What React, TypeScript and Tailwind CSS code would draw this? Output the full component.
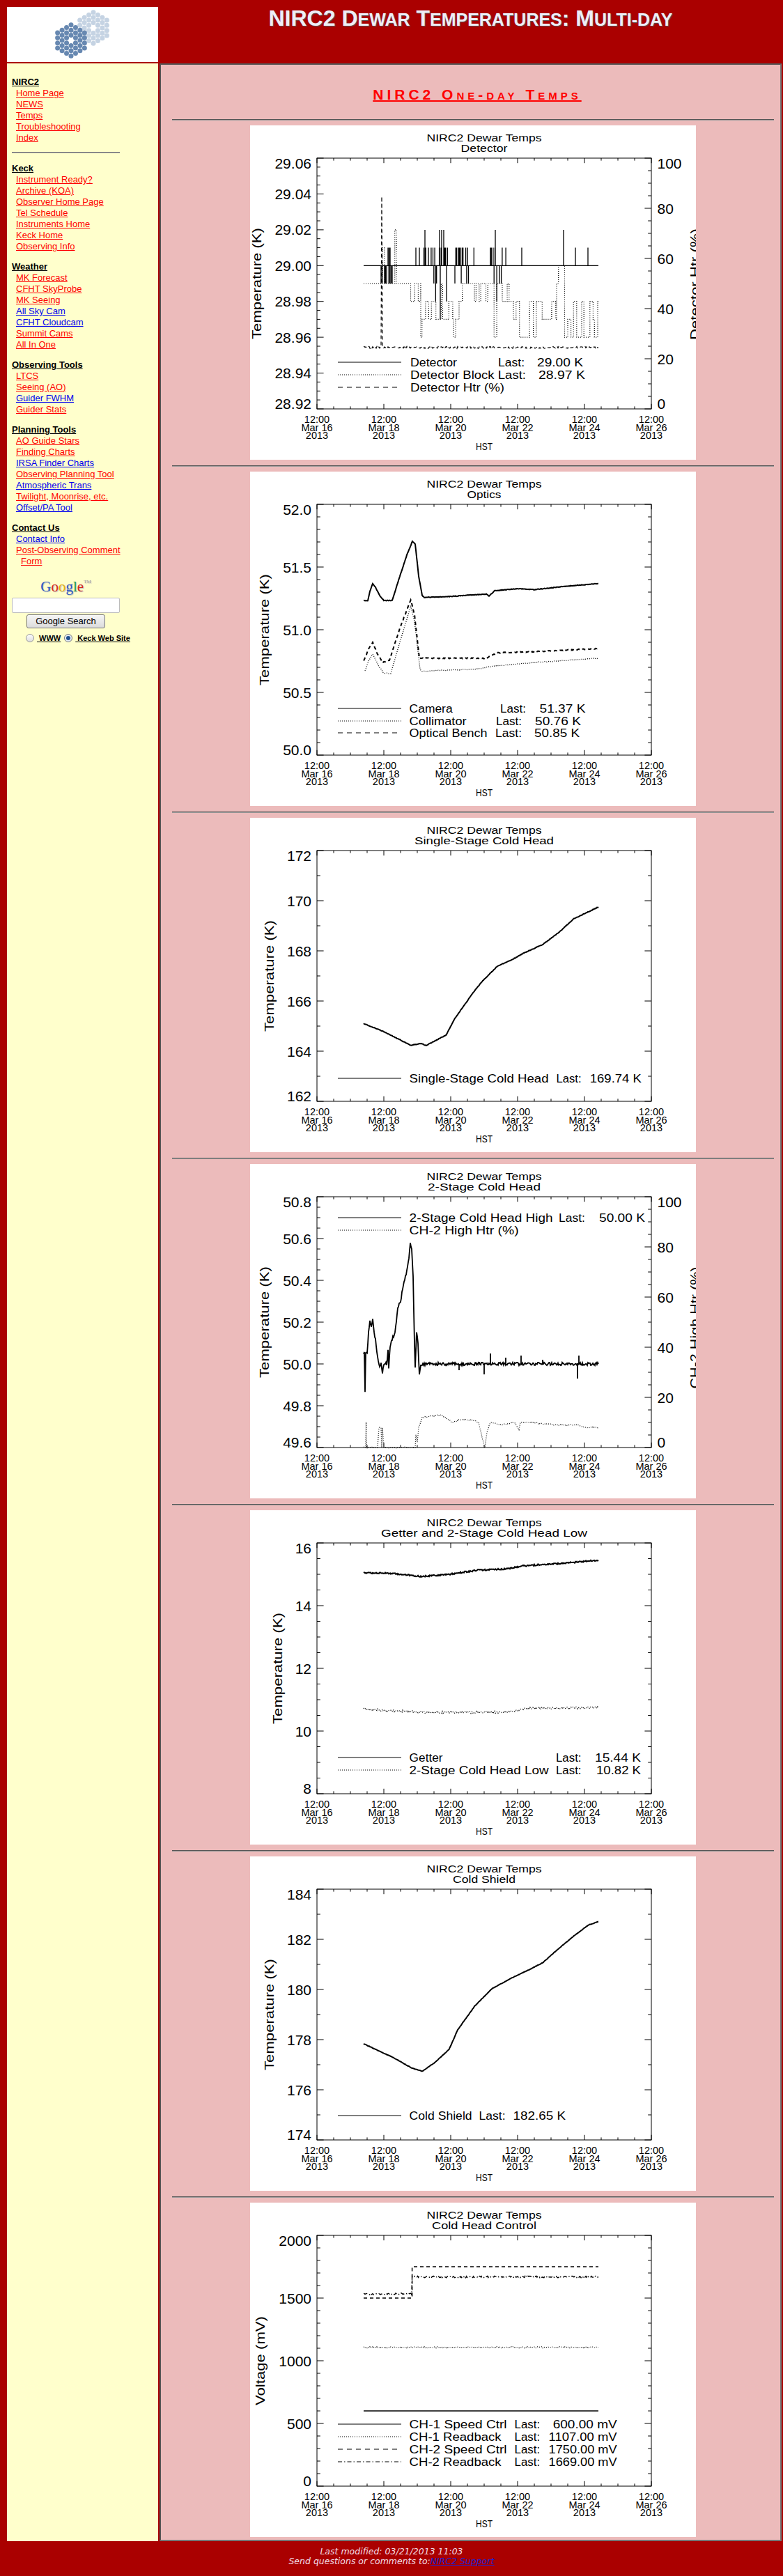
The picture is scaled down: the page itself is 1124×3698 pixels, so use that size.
import React from 'react';

type Style = 'solid' | 'dot' | 'dash' | 'dashdot';
type Axis = { min: number; max: number; major: number; minor: number; dec: number };
type Series = { d: string; style: Style; w?: number };
type LegendRow = { style: Style; y: number; segs: [string, number, number][] };
type ChartCfg = {
  sub: string;
  subW: number;
  left: Axis;
  yTitle: string;
  yTitleX: number;
  yTitleW: number;
  right?: { axis: Axis; title: string; titleW: number; titleY: number };
  legend: LegendRow[];
  series: Series[];
};

const PX0 = 96;
const PX1 = 576;
const PY0 = 47;
const PY1 = 407;
const DATES = ['Mar 16', 'Mar 18', 'Mar 20', 'Mar 22', 'Mar 24', 'Mar 26'];

function rng(seed: number) {
  let s = seed;
  return () => {
    s = (s * 16807) % 2147483647;
    return (s - 1) / 2147483646;
  };
}

const f = (n: number) => n.toFixed(1);

// key points joined up, with a little noise on the way
function interp(keys: [number, number][], amp: number, seed: number): string {
  const r = rng(seed);
  const out: string[] = [];
  for (let i = 0; i < keys.length - 1; i++) {
    const [x0, y0] = keys[i];
    const [x1, y1] = keys[i + 1];
    const n = Math.max(1, Math.round(x1 - x0));
    for (let k = 0; k < n; k++) {
      const t = k / n;
      out.push(`${f(x0 + (x1 - x0) * t)},${f(y0 + (y1 - y0) * t + (r() - 0.5) * 2 * amp)}`);
    }
  }
  const last = keys[keys.length - 1];
  out.push(`${f(last[0])},${f(last[1])}`);
  return 'M' + out.join(' L');
}

function bars(x0: number, x1: number, step: number, p: number, levels: number[], yb: number, Y: (v: number) => number, seed: number) {
  const r = rng(seed);
  let d = '';
  for (let x = x0; x <= x1; x += step) {
    if (r() < p) {
      const l = levels[Math.floor(r() * levels.length)];
      d += `M${f(x)},${f(yb)}V${f(Y(l))}`;
    }
  }
  return d;
}

function steps(ranges: [number, number, number[]][], Y: (v: number) => number, seed: number, minLen: number, maxLen: number) {
  const r = rng(seed);
  let d = `M${ranges[0][0]},${f(Y(ranges[0][2][0]))}`;
  for (const [a, b, lv] of ranges) {
    let x = a;
    while (x < b) {
      const nx = Math.min(b, x + minLen + r() * (maxLen - minLen));
      d += `V${f(Y(lv[Math.floor(r() * lv.length)]))}H${f(nx)}`;
      x = nx;
    }
  }
  return d;
}

const map = (keys: [number, number][], Y: (v: number) => number): [number, number][] => keys.map(([x, v]) => [x, Y(v)]);

/* ---------- chart data ---------- */

const Y1 = (t: number) => 47 + ((29.06 - t) / 0.14) * 360;
const YR = (p: number) => 407 - p * 3.6;
const b1 = Y1(29.0);
const det =
  `M163,${f(b1)}H500` +
  bars(188, 205, 1.6, 0.7, [28.99], b1, Y1, 11) +
  bars(198, 202, 1.5, 1, [29.01], b1, Y1, 12) +
  `M238,${f(b1)}V${f(Y1(29.01))}` +
  bars(243, 285, 1.3, 0.7, [28.99, 28.99, 28.98, 29.01, 29.01], b1, Y1, 13) +
  bars(294, 323, 1.3, 0.65, [29.01, 29.01, 28.99], b1, Y1, 14) +
  bars(345, 368, 1.3, 0.65, [28.99, 28.98, 29.01], b1, Y1, 15) +
  [251, 272, 275, 278, 352, 450].map((x) => `M${x},${f(b1)}V${f(Y1(29.02))}`).join('') +
  `M273,${f(b1)}V${f(Y1(28.97))}` +
  [390, 467, 485].map((x) => `M${x},${f(b1)}V${f(Y1(29.01))}`).join('');
const block = steps(
  [
    [163, 190, [28.99]],
    [190, 210, [28.99, 29.02, 28.99, 29.01, 28.99, 29.02]],
    [210, 245, [28.98, 28.99]],
    [245, 262, [28.96, 28.97, 28.98]],
    [262, 292, [28.97, 28.98, 28.99]],
    [292, 300, [28.96, 28.97]],
    [300, 345, [28.98, 28.99]],
    [345, 362, [28.96, 28.97, 28.99]],
    [362, 378, [28.98, 28.99]],
    [378, 440, [28.96, 28.97, 28.98]],
    [440, 456, [28.96, 28.99, 29.0, 28.98]],
    [456, 500, [28.96, 28.97, 28.98]],
  ],
  Y1,
  21,
  1.5,
  5
);
const htr1 = interp(
  map(
    [
      [163, 24.5],
      [188, 24.5],
      [189, 85],
      [190, 24.5],
      [500, 24.5],
    ],
    YR
  ),
  1.4,
  31
);

const cam = interp(
  [
    [163, 185], [169, 185], [172, 172], [176, 161], [180, 166], [186, 178], [192, 185], [204, 185],
    [215, 150], [225, 120], [233, 100], [237, 104], [242, 150], [247, 177.6], [250, 180.7], [286, 179.4],
    [339, 175.7], [343, 178.8], [351, 171], [384, 168], [408, 169.5], [449, 165], [500, 160.7],
  ],
  0.4,
  41
);
const coll = interp(
  [
    [165, 286.6], [170, 272], [176, 261.7], [184, 278], [192, 289.7], [202, 289.7], [215, 245], [230.6, 193],
    [236, 215], [244, 283.5], [246, 286.6], [326.5, 283.5], [343, 280], [408, 274], [500, 268],
  ],
  0.5,
  42
);
const bench = interp(
  [
    [163, 272], [170, 255], [176, 245], [183, 262], [190.6, 274], [200, 271], [215, 225], [230.6, 184],
    [236, 205], [243, 268], [286, 268], [339, 268], [355, 260], [408, 258.6], [500, 254],
  ],
  0.6,
  43
);

const cold1 = interp(
  [
    [163, 295.5], [192, 307], [230.6, 326.7], [245, 324], [253, 326.7], [281.6, 311.7], [294, 288], [322, 248.5],
    [333, 235], [355, 213], [375.5, 204], [392, 194.6], [420, 182], [445, 163], [465, 144.7], [500, 128],
  ],
  0.4,
  51
);

const Y4 = (t: number) => 47 + (50.8 - t) * 300;
const ch2 =
  interp(
    map(
      [
        [163, 50.04], [164, 50.05], [165, 49.86], [166, 50.06], [168, 50.05], [170, 50.15], [172, 50.2], [174, 50.18],
        [176, 50.21], [178, 50.15], [180, 50.12], [182, 50.05], [184, 50.02], [186, 49.99], [188, 50.0], [190, 49.96],
        [192, 50.0], [196, 50.0], [198, 50.06], [199, 49.98], [201, 50.08], [204, 50.12], [208, 50.15], [212, 50.27],
        [216, 50.3], [220, 50.38], [224, 50.43], [228, 50.5], [230, 50.58], [232, 50.55], [234, 50.42], [236, 50.1],
        [237, 49.98], [239, 50.15], [241, 50.1], [243, 49.95], [245, 50.0], [500, 50.0],
      ],
      Y4
    ),
    2.2,
    61
  ) +
  [
    [336, 49.95], [345, 50.05], [367, 50.03], [389, 50.04], [470, 49.93], [472, 50.04], [300, 49.97], [420, 50.02],
  ]
    .map(([x, v]) => `M${x},${f(Y4(50))}V${f(Y4(v))}`)
    .join('');
const htr4 = interp(
  map(
    [
      [163, 0], [166, 0], [166.5, 10], [167, 0], [183, 0], [185, 8], [188, 8], [189, 0], [190, 8], [192, 0],
      [237, 0], [238, 5], [240, 2], [242, 8], [247, 12], [260, 12.5], [275, 13], [280, 12], [290, 10], [300, 11],
      [320, 11], [328, 10], [334, 3], [337, 0], [340, 6], [345, 10], [360, 9], [380, 10], [386, 7], [388, 10],
      [400, 10], [440, 9], [470, 9], [480, 8], [500, 8],
    ],
    YR
  ),
  0.8,
  62
);

const Y5 = (t: number) => 47 + (16 - t) * 45;
const getter = interp(
  map(
    [
      [163, 15.05], [205, 15.03], [245, 14.93], [286, 15.0], [326, 15.13], [367, 15.17], [392, 15.27], [449, 15.35], [500, 15.45],
    ],
    Y5
  ),
  1,
  71
);
const low = interp(
  map(
    [
      [163, 10.7], [245, 10.6], [367, 10.6], [400, 10.72], [500, 10.75],
    ],
    Y5
  ),
  1.5,
  72
);

const shield = interp(
  [
    [163, 269], [204, 288], [232.6, 304], [247, 308.4], [265, 296], [285.7, 277], [298, 249], [322.4, 215], [347, 190],
    [375.5, 174.5], [400, 163], [420, 152.6], [441, 134], [465, 114], [485.7, 98.4], [500, 93.5],
  ],
  0.3,
  81
);

const Y7 = (v: number) => 47 + (2000 - v) * 0.18;
const sp1 = `M163,${f(Y7(600))}H500`;
const rb1 = interp(map([[163, 1107], [500, 1107]], Y7), 1, 91);
const sp2 = `M163,${f(Y7(1500))}H232.6V${f(Y7(1750))}H500`;
const rb2 = interp(map([[163, 1530], [230, 1535], [232, 1530], [232.6, 1669], [500, 1669]], Y7), 1.2, 92);

const TEMP = 'Temperature (K)';

const CHARTS: ChartCfg[] = [
  {
    sub: 'Detector',
    subW: 67,
    left: { min: 28.92, max: 29.06, major: 0.02, minor: 4, dec: 2 },
    yTitle: TEMP,
    yTitleX: 15.5,
    yTitleW: 160,
    right: { axis: { min: 0, max: 100, major: 20, minor: 4, dec: 0 }, title: 'Detector Htr (%)', titleW: 160, titleY: 228 },
    legend: [
      { style: 'solid', y: 340, segs: [['Detector', 230, 67], ['Last:', 356, 38], ['29.00 K', 412, 66]] },
      { style: 'dot', y: 358, segs: [['Detector Block Last:', 230, 166], ['28.97 K', 414, 67]] },
      { style: 'dash', y: 376, segs: [['Detector Htr (%)', 230, 135]] },
    ],
    series: [
      { d: det, style: 'solid', w: 1.3 },
      { d: block, style: 'dot', w: 1.2 },
      { d: htr1, style: 'dash', w: 1.2 },
    ],
  },
  {
    sub: 'Optics',
    subW: 49,
    left: { min: 50, max: 52, major: 0.5, minor: 5, dec: 1 },
    yTitle: TEMP,
    yTitleX: 26.5,
    yTitleW: 160,
    legend: [
      { style: 'solid', y: 340, segs: [['Camera', 228.6, 62], ['Last:', 359, 37], ['51.37 K', 415.5, 66]] },
      { style: 'dot', y: 358, segs: [['Collimator', 228.6, 82], ['Last:', 353, 37], ['50.76 K', 409, 66]] },
      { style: 'dash', y: 375, segs: [['Optical Bench', 228.6, 112], ['Last:', 352, 38], ['50.85 K', 408, 65]] },
    ],
    series: [
      { d: cam, style: 'solid', w: 2 },
      { d: coll, style: 'dot', w: 1.3 },
      { d: bench, style: 'dash', w: 2 },
    ],
  },
  {
    sub: 'Single-Stage Cold Head',
    subW: 200,
    left: { min: 162, max: 172, major: 2, minor: 2, dec: 0 },
    yTitle: TEMP,
    yTitleX: 34,
    yTitleW: 160,
    legend: [
      { style: 'solid', y: 374, segs: [['Single-Stage Cold Head', 228.6, 200], ['Last:', 439.6, 36], ['169.74 K', 487.8, 74]] },
    ],
    series: [{ d: cold1, style: 'solid', w: 2 }],
  },
  {
    sub: '2-Stage Cold Head',
    subW: 162,
    left: { min: 49.6, max: 50.8, major: 0.2, minor: 4, dec: 1 },
    yTitle: TEMP,
    yTitleX: 26.5,
    yTitleW: 160,
    right: { axis: { min: 0, max: 100, major: 20, minor: 4, dec: 0 }, title: 'CH-2 High Htr (%)', titleW: 175, titleY: 235 },
    legend: [
      { style: 'solid', y: 77, segs: [['2-Stage Cold Head High', 228.6, 206], ['Last:', 442.9, 38], ['50.00 K', 501, 66]] },
      { style: 'dot', y: 95, segs: [['CH-2 High Htr (%)', 228.6, 157]] },
    ],
    series: [
      { d: ch2, style: 'solid', w: 1.8 },
      { d: htr4, style: 'dot', w: 1.2 },
    ],
  },
  {
    sub: 'Getter and 2-Stage Cold Head Low',
    subW: 296,
    left: { min: 8, max: 16, major: 2, minor: 4, dec: 0 },
    yTitle: TEMP,
    yTitleX: 46,
    yTitleW: 160,
    legend: [
      { style: 'solid', y: 355, segs: [['Getter', 228.6, 48], ['Last:', 439, 36.5], ['15.44 K', 495, 66]] },
      { style: 'dot', y: 373, segs: [['2-Stage Cold Head Low', 228.6, 200], ['Last:', 439, 36.5], ['10.82 K', 497, 64]] },
    ],
    series: [
      { d: getter, style: 'solid', w: 2 },
      { d: low, style: 'dot', w: 1.4 },
    ],
  },
  {
    sub: 'Cold Shield',
    subW: 90,
    left: { min: 174, max: 184, major: 2, minor: 2, dec: 0 },
    yTitle: TEMP,
    yTitleX: 34,
    yTitleW: 160,
    legend: [{ style: 'solid', y: 372, segs: [['Cold Shield', 228.6, 90], ['Last:', 328.6, 38], ['182.65 K', 377.5, 75.5]] }],
    series: [{ d: shield, style: 'solid', w: 2 }],
  },
  {
    sub: 'Cold Head Control',
    subW: 150,
    left: { min: 0, max: 2000, major: 500, minor: 5, dec: 0 },
    yTitle: 'Voltage (mV)',
    yTitleX: 20.5,
    yTitleW: 128,
    legend: [
      { style: 'solid', y: 318, segs: [['CH-1 Speed Ctrl', 228.6, 140], ['Last:', 379.6, 36.5], ['600.00 mV', 434.7, 92]] },
      { style: 'dot', y: 336, segs: [['CH-1 Readback', 228.6, 132], ['Last:', 379.6, 36.5], ['1107.00 mV', 428.6, 98]] },
      { style: 'dash', y: 354, segs: [['CH-2 Speed Ctrl', 228.6, 140], ['Last:', 379.6, 36.5], ['1750.00 mV', 428.6, 98]] },
      { style: 'dashdot', y: 372, segs: [['CH-2 Readback', 228.6, 132], ['Last:', 379.6, 36.5], ['1669.00 mV', 428.6, 98]] },
    ],
    series: [
      { d: sp1, style: 'solid', w: 1.5 },
      { d: rb1, style: 'dot', w: 1.2 },
      { d: sp2, style: 'dash', w: 1.5 },
      { d: rb2, style: 'dashdot', w: 1.4 },
    ],
  },
];

const dash = (s: Style, legend: boolean) =>
  s === 'dot' ? '1 2' : s === 'dash' ? (legend ? '7 6' : '5 4') : s === 'dashdot' ? '6 3 1.5 3' : undefined;

const yOf = (a: Axis, v: number) => PY0 + ((a.max - v) / (a.max - a.min)) * (PY1 - PY0);

function AxisY({ a, side, labels }: { a: Axis; side: 'l' | 'r'; labels: boolean }) {
  const n = Math.round(((a.max - a.min) / a.major) * a.minor);
  const nMaj = Math.round((a.max - a.min) / a.major);
  const x0 = side === 'l' ? PX0 : PX1;
  const dir = side === 'l' ? 1 : -1;
  let d = '';
  for (let i = 0; i <= n; i++) {
    const y = yOf(a, a.min + (i * a.major) / a.minor);
    d += `M${x0},${f(y)}h${dir * (i % a.minor === 0 ? 9.6 : 4.8)}`;
  }
  return (
    <g>
      <path d={d} stroke="black" strokeWidth={1} fill="none" />
      {labels &&
        Array.from({ length: nMaj + 1 }, (_, j) => {
          const v = a.min + j * a.major;
          const y = yOf(a, v);
          const base = j === 0 ? PY1 : j === nMaj ? PY0 + 15 : y + 7.5;
          return (
            <text key={j} x={side === 'l' ? 88 : 584.5} y={base} fontSize={21} textAnchor={side === 'l' ? 'end' : 'start'}>
              {v.toFixed(a.dec)}
            </text>
          );
        })}
    </g>
  );
}

function Chart({ c }: { c: ChartCfg }) {
  let xt = '';
  for (let i = 0; i <= 20; i++) {
    const x = PX0 + i * 24;
    const len = i % 4 === 0 ? 7.2 : 3.6;
    xt += `M${x},${PY1}v${-len}M${x},${PY0}v${len}`;
  }
  return (
    <svg width={640} height={480} viewBox="0 0 640 480" className="block" fontFamily="'Liberation Sans', Arial, sans-serif" fill="black">
      <rect width={640} height={480} fill="white" />
      <text x={336} y={23} fontSize={14} textAnchor="middle" textLength={165} lengthAdjust="spacingAndGlyphs">
        NIRC2 Dewar Temps
      </text>
      <text x={336} y={38} fontSize={14} textAnchor="middle" textLength={c.subW} lengthAdjust="spacingAndGlyphs">
        {c.sub}
      </text>
      <rect x={PX0} y={PY0} width={PX1 - PX0} height={PY1 - PY0} fill="none" stroke="black" strokeWidth={1} />
      <path d={xt} stroke="black" strokeWidth={1} fill="none" />
      <AxisY a={c.left} side="l" labels />
      {c.right ? <AxisY a={c.right.axis} side="r" labels /> : <AxisY a={c.left} side="r" labels={false} />}
      {DATES.map((dt, i) => {
        const x = PX0 + i * 96;
        return (
          <g key={dt} fontSize={14.5} textAnchor="middle">
            <text x={x} y={427}>12:00</text>
            <text x={x} y={438.5}>{dt}</text>
            <text x={x} y={450}>2013</text>
          </g>
        );
      })}
      <text x={336} y={466} fontSize={14} textAnchor="middle" textLength={24} lengthAdjust="spacingAndGlyphs">
        HST
      </text>
      <text
        transform={`translate(${c.yTitleX},227) rotate(-90)`}
        fontSize={18}
        textAnchor="middle"
        textLength={c.yTitleW}
        lengthAdjust="spacingAndGlyphs"
      >
        {c.yTitle}
      </text>
      {c.right && (
        <text
          transform={`translate(645,${c.right.titleY}) rotate(-90)`}
          fontSize={18}
          textAnchor="middle"
          textLength={c.right.titleW}
          lengthAdjust="spacingAndGlyphs"
        >
          {c.right.title}
        </text>
      )}
      {c.series.map((s, i) => (
        <path
          key={i}
          d={s.d}
          fill="none"
          stroke="black"
          strokeWidth={s.w ?? 1.5}
          strokeDasharray={dash(s.style, false)}
        />
      ))}
      {c.legend.map((row, i) => (
        <g key={i}>
          <path d={`M126,${row.y}H217`} stroke="black" strokeWidth={1} strokeDasharray={dash(row.style, true)} />
          {row.segs.map(([t, x, w]) => (
            <text key={t + x} x={x} y={row.y + 6} fontSize={16} textLength={w} lengthAdjust="spacingAndGlyphs">
              {t}
            </text>
          ))}
        </g>
      ))}
    </svg>
  );
}

/* ---------- page chrome ---------- */

function Logo() {
  const cells = (cx: number, cy: number, fill: string, key: string) => {
    const out: React.ReactNode[] = [];
    for (let q = -3; q <= 3; q++) {
      for (let r = -3; r <= 3; r++) {
        if (Math.max(Math.abs(q), Math.abs(r), Math.abs(q + r)) > 3 || (q === 0 && r === 0)) continue;
        out.push(<circle key={`${key}${q}_${r}`} cx={cx + q * 6.45} cy={cy + (r + q / 2) * 7.4} r={3.5} fill={fill} />);
      }
    }
    return out;
  };
  return (
    <svg width={217} height={79} viewBox="0 0 217 79" className="block">
      {cells(124, 30, '#c5d3e3', 'l')}
      {cells(92, 48, '#6788b1', 'd')}
    </svg>
  );
}

type Link = [string, 'r' | 'b'];
const NAV: { title: string; links: Link[] }[] = [
  { title: 'Keck', links: [['Instrument Ready?', 'r'], ['Archive (KOA)', 'r'], ['Observer Home Page', 'r'], ['Tel Schedule', 'r'], ['Instruments Home', 'r'], ['Keck Home', 'r'], ['Observing Info', 'r']] },
  { title: 'Weather', links: [['MK Forecast', 'r'], ['CFHT SkyProbe', 'r'], ['MK Seeing', 'r'], ['All Sky Cam', 'b'], ['CFHT Cloudcam', 'b'], ['Summit Cams', 'r'], ['All In One', 'r']] },
  { title: 'Observing Tools', links: [['LTCS', 'r'], ['Seeing (AO)', 'r'], ['Guider FWHM', 'b'], ['Guider Stats', 'r']] },
  { title: 'Planning Tools', links: [['AO Guide Stars', 'r'], ['Finding Charts', 'r'], ['IRSA Finder Charts', 'b'], ['Observing Planning Tool', 'r'], ['Atmospheric Trans', 'b'], ['Twilight, Moonrise, etc.', 'r'], ['Offset/PA Tool', 'b']] },
];

const linkCls = (c: 'r' | 'b') => (c === 'r' ? 'underline text-[#ff0000]' : 'underline text-[#0000ee]');

function NavLinks({ links }: { links: Link[] }) {
  return (
    <>
      {links.map(([t, c]) => (
        <div key={t} className="pl-[6px]">
          <a className={linkCls(c)}>{t}</a>
        </div>
      ))}
    </>
  );
}

function Sidebar() {
  return (
    <aside className="bg-[#ffffcc] pl-[7px] pt-[19px] text-[13px] leading-[16px]">
      <div className="font-bold underline text-black">NIRC2</div>
      <NavLinks links={[['Home Page', 'r'], ['NEWS', 'r'], ['Temps', 'r'], ['Troubleshooting', 'r'], ['Index', 'r']]} />
      <div className="mt-[12px] mb-[14px] w-[155px] h-[2px] border-t border-t-[#666] border-b border-b-[#bbb]" />
      {NAV.map((s, i) => (
        <div key={s.title} className={i === 0 ? '' : 'mt-[13px]'}>
          <div className="font-bold underline text-black">{s.title}</div>
          <NavLinks links={s.links} />
        </div>
      ))}
      <div className="mt-[13px]">
        <div className="font-bold underline text-black">Contact Us</div>
        <div className="pl-[6px]">
          <a className={linkCls('b')}>Contact Info</a>
        </div>
        <div className="pl-[6px]">
          <a className={linkCls('r')}>Post-Observing Comment</a>
        </div>
        <div className="pl-[13px]">
          <a className={linkCls('r')}>Form</a>
        </div>
      </div>
      <div className="mt-[16px] w-[155px] h-[24px] flex items-center justify-center font-['Liberation_Serif',serif] text-[21px] leading-none [text-shadow:1px_1px_1px_#bbb]">
        <span className="text-[#2a57c4]">G</span>
        <span className="text-[#d42a1c]">o</span>
        <span className="text-[#e8b30c]">o</span>
        <span className="text-[#2a57c4]">g</span>
        <span className="text-[#1d9a3a]">l</span>
        <span className="text-[#d42a1c]">e</span>
        <span className="text-[7px] text-[#999] self-start mt-[2px]">TM</span>
      </div>
      <div className="mt-[4px] w-[155px] h-[22px] bg-white border border-[#bcbcbc] rounded-[2px]" />
      <div className="mt-[2px] w-[155px] flex justify-center">
        <div className="w-[113px] h-[20px] border border-[#777] rounded-[3px] bg-gradient-to-b from-[#f6f6f6] to-[#dcdcdc] text-[13px] leading-[18px] text-black text-center">
          Google Search
        </div>
      </div>
      <div className="mt-[7px] flex items-center h-[14px] text-[11px] font-bold text-black">
        <span className="ml-[20px] w-[12px] h-[12px] rounded-full border border-[#9a9a9a] bg-gradient-to-b from-[#fdfdfd] to-[#dedede]" />
        <span className="ml-[4px] underline">&nbsp;WWW</span>
        <span className="ml-[5px] w-[12px] h-[12px] rounded-full border border-[#7a7a7a] bg-[#e4ecf6] flex items-center justify-center">
          <span className="w-[6px] h-[6px] rounded-full bg-[#1f4f8f]" />
        </span>
        <span className="ml-[4px] underline">&nbsp;Keck Web Site</span>
      </div>
    </aside>
  );
}

function Rule() {
  return <div className="h-[2px] border-t border-t-[#555] border-b border-b-[#999]" />;
}

export default function App() {
  return (
    <div className="bg-[#aa0000] w-[1124px] min-h-[3698px] font-['Liberation_Sans',Arial,sans-serif]">
      <div className="grid grid-cols-[217px_893px] gap-[2px] pt-[10px] pl-[10px]">
        <div className="bg-white h-[79px]">
          <Logo />
        </div>
        <div className="h-[79px]">
          <h1 className="text-[32px] leading-none font-bold text-[#eeeef6] text-center [text-shadow:1px_1px_1px_#555]">
            NIRC2 D<span className="text-[25px]">EWAR</span> T<span className="text-[25px]">EMPERATURES</span>: M
            <span className="text-[25px]">ULTI-DAY</span>
          </h1>
        </div>
        <Sidebar />
        <main className="bg-[#ecbbbb] border-2 border-t-[#555] border-l-[#555] border-b-[#777] border-r-[#777] pl-[16px] pr-[9px] pt-[31px] pb-[4px]">
          <div className="h-[24px] leading-[24px] text-center pl-[12px] mb-[23px]">
            <span className="text-[21px] font-bold text-[#ff0000] underline decoration-2 tracking-[5px] [font-variant:small-caps]">
              NIRC2 One-day Temps
            </span>
          </div>
          {CHARTS.map((c, i) => (
            <div key={c.sub}>
              {i > 0 && <div className="h-[8px]" />}
              <Rule />
              <div className="flex justify-center pt-[7px]">
                <Chart c={c} />
              </div>
            </div>
          ))}
        </main>
      </div>
      <footer className="pt-[8px] text-center italic text-[12.5px] leading-[14.4px] text-[#f2dce6] font-['DejaVu_Sans',Verdana,sans-serif]">
        <div>Last modified: 03/21/2013 11:03</div>
        <div>
          Send questions or comments to:<a className="underline text-[#2020d0]">NIRC2 Support</a>
        </div>
      </footer>
    </div>
  );
}
